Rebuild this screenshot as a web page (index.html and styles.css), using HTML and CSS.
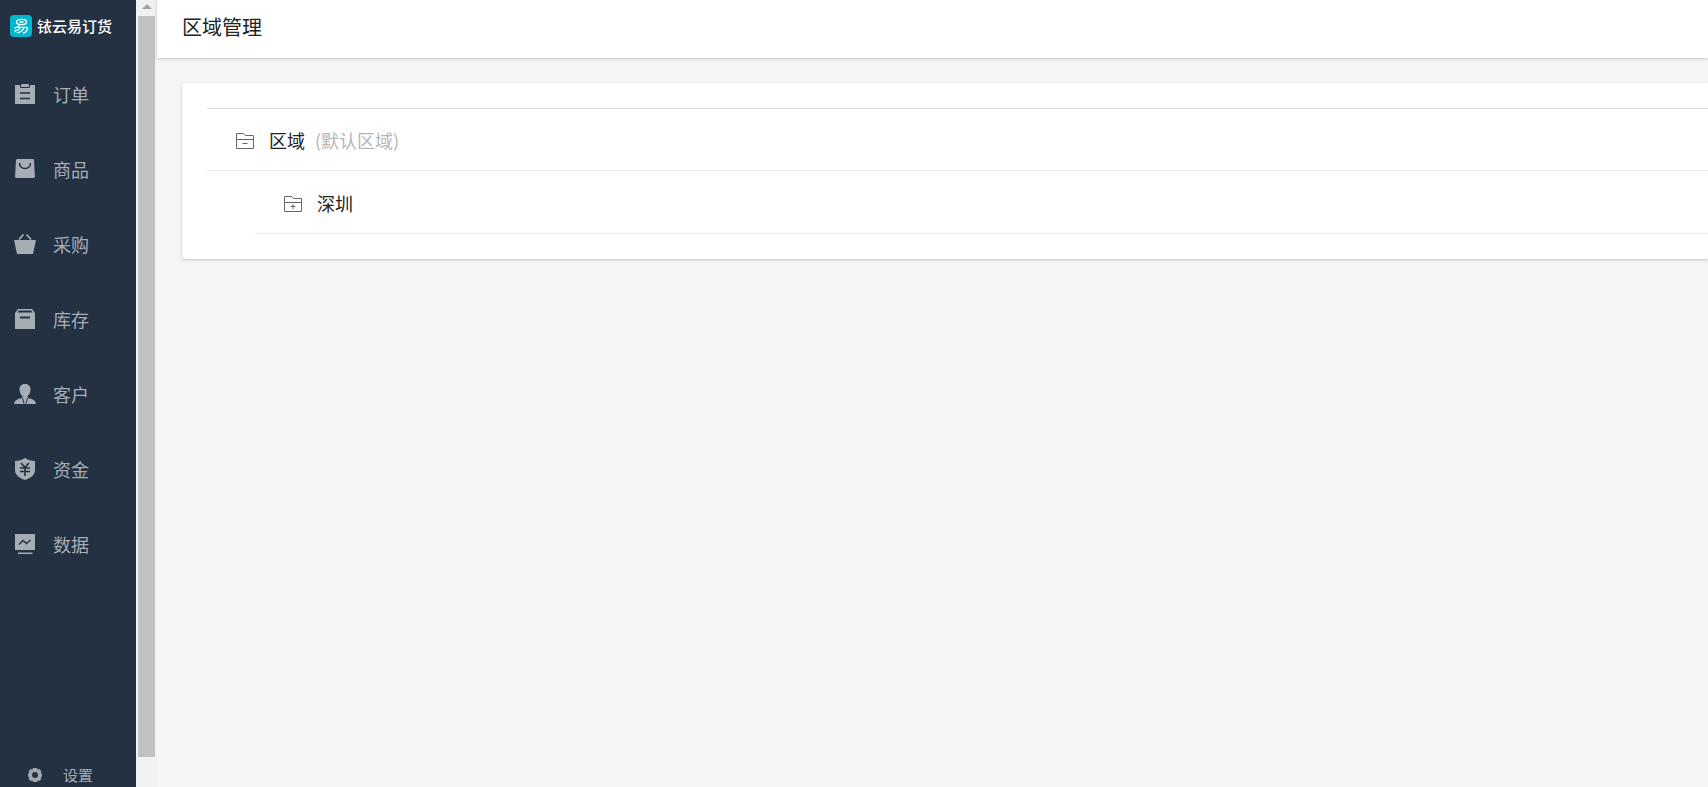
FILE: index.html
```html
<!DOCTYPE html>
<html lang="zh-CN">
<head>
<meta charset="utf-8">
<title>区域管理</title>
<link rel="stylesheet" href="styles.css">
</head>
<body>
<div class="app">
  <aside class="sidebar">
    <div class="brand">
      <svg class="brand-mark" viewBox="0 0 22 22" aria-hidden="true">
        <rect width="22" height="22" rx="4" fill="#00b7d0"/>
        <g fill="none" stroke="#fff" stroke-width="1.3" stroke-linecap="round">
          <ellipse cx="11.5" cy="7" rx="5" ry="2.6"/>
          <path d="M10 7h3M5 13c2-.5 3.500-1.500 4.500-3M7 12.300h9.500c.8 0 1 .4.800 1.200-.5 2.500-1.500 4.300-3.800 4.500M10.500 12.500c-1 1.800-3 3-5.500 3.500M14 12.500c-1 2.700-3.500 4.700-6.500 5.200"/>
        </g>
      </svg>
      <span class="brand-name">铱云易订货</span>
    </div>
    <nav class="menu">
      <a class="menu-item" href="#"><svg class="icon" viewBox="0 0 22 22"><path fill="#a6adb5" d="M1 2h5v1.500c0 .8.600 1.500 1.500 1.500h7c.9 0 1.500-.7 1.500-1.500V2h5v19H1z"/><rect x="7" y="1" width="8" height="3" rx="1" fill="#a6adb5"/><path d="M6 10h10M6 15.500h10" stroke="#233142" stroke-width="1.500"/></svg><span>订单</span></a>
      <a class="menu-item" href="#"><svg class="icon" viewBox="0 0 22 22"><path fill="#a6adb5" d="M3 1h16l1 .8 1 17.200-1 1H2l-1-1L2 1.800z"/><path d="M5.500 5c0 3.500 2.500 5.500 5.500 5.500s5.500-2 5.500-5.500" fill="none" stroke="#233142" stroke-width="1.500"/></svg><span>商品</span></a>
      <a class="menu-item" href="#"><svg class="icon" viewBox="0 0 22 22"><path fill="#a6adb5" d="M0 7h22l-3 14H3z"/><path d="M5 6.500 9.500 1.500M17 6.500l-4.500-5" stroke="#a6adb5" stroke-width="1.700"/></svg><span>采购</span></a>
      <a class="menu-item" href="#"><svg class="icon" viewBox="0 0 22 22"><path fill="#a6adb5" fill-rule="evenodd" d="M4 1h14l3 4v16H1V5zM4.700 2.500 3.500 4.500h15l-1.200-2z"/><path d="M6 9.500h10" stroke="#233142" stroke-width="2"/></svg><span>库存</span></a>
      <a class="menu-item" href="#"><svg class="icon" viewBox="0 0 22 22"><path fill="#a6adb5" d="M11 1c4 0 5.700 2.500 5.500 5.500-.2 3.500-1.800 6-3.300 7l1 1.500c4 1 7.300 2 7.800 6H0c.5-4 3.800-5 7.800-6l1-1.500c-1.500-1-3.100-3.500-3.300-7C5.300 3.500 7 1 11 1z"/><path d="m8.500 15 1.500 5.500M13.500 15 12 20.500" stroke="#233142" fill="none"/></svg><span>客户</span></a>
      <a class="menu-item" href="#"><svg class="icon" viewBox="0 0 22 22"><path fill="#a6adb5" d="M11 0c3 2 6 3 10 3v9c0 5-4 8-10 10C5 20 1 17 1 12V3c4 0 7-1 10-3z"/><path d="m7 5 4 4.500L15 5M6 10h10M6 13.500h10M11 9.500V18" stroke="#233142" stroke-width="1.600" fill="none"/></svg><span>资金</span></a>
      <a class="menu-item" href="#"><svg class="icon" viewBox="0 0 22 22"><path fill="#a6adb5" d="M1 1h20v16H1zM4 19.500h14.500V21H4z"/><path d="m5 11.500 4-4 3.500 3L16.500 7" stroke="#233142" stroke-width="1.400" fill="none"/></svg><span>数据</span></a>
    </nav>
    <a class="settings" href="#"><svg class="gear" viewBox="0 0 14 14"><path fill="#a0a8ae" fill-rule="evenodd" d="M5 0h4l.7 1.500L11.500 1 13.500 3.500l-.7 1.500L14 6v2.500l-1.200.8.5 1.700-2 2-1.700-.5L9 14H5l-.7-1.500-1.800.5L.5 10.800l.7-1.500L0 8.500V6l1.200-1L.5 3.500 2.500 1l1.800.5zM7 4a3 3 0 100 6 3 3 0 000-6z"/></svg><span>设置</span></a>
  </aside>
  <div class="scrollbar" aria-hidden="true">
    <span class="scroll-arrow"></span>
    <span class="scroll-thumb"></span>
  </div>
  <main class="content">
    <header class="page-header"><h1 class="page-title">区域管理</h1></header>
    <section class="card">
      <ul class="tree">
        <li>
          <div class="node">
            <button class="toggle" type="button" aria-label="收起"><svg class="folder" viewBox="0 0 18 16"><path d="M.5 15.500V.5h7l2 2h8v13zM.5 6.500h17M6.500 10.500h5"/></svg></button>
            <span>区域</span><span class="note">(默认区域)</span>
          </div>
          <ul class="subtree">
            <li>
              <div class="node">
                <button class="toggle" type="button" aria-label="展开"><svg class="folder" viewBox="0 0 18 16"><path d="M.5 15.500V.5h7l2 2h8v13zM.5 6.500h17M6.500 10.500h5M9 8v5"/></svg></button>
                <span>深圳</span>
              </div>
            </li>
          </ul>
        </li>
      </ul>
    </section>
  </main>
</div>
</body>
</html>
```
FILE: styles.css
```css
* { box-sizing: border-box; }
body {
  margin: 0;
  font-family: "Noto Sans CJK SC", sans-serif;
  font-weight: 400;
  color: #222;
}
a { color: inherit; text-decoration: none; }
ul { list-style: none; margin: 0; padding: 0; }
.app {
  display: flex;
  height: 100vh;
  overflow: hidden;
  background: #f4f5f7;
}
.sidebar {
  display: flex;
  flex-direction: column;
  flex: none;
  width: 136px;
  background: #233142;
  color: #a6adb5;
}
.brand {
  display: flex;
  align-items: center;
  gap: 5px;
  height: 56px;
  padding: 0 0 4px 10px;
}
.brand-mark { width: 22px; height: 22px; }
.brand-name { color: #fff; font-size: 15px; font-weight: 500; line-height: 22px; }
.menu-item {
  display: flex;
  align-items: center;
  gap: 17px;
  height: 75px;
  padding-left: 14px;
  font-size: 18px;
}
.icon { width: 22px; height: 22px; }
.settings {
  display: flex;
  align-items: center;
  gap: 21px;
  margin-top: auto;
  padding-left: 28px;
  font-size: 15px;
  line-height: 24px;
}
.gear { width: 14px; height: 14px; }
.scrollbar {
  display: flex;
  flex-direction: column;
  align-items: center;
  flex: none;
  width: 21px;
  padding-bottom: 30px;
  background: #f1f1f1;
}
.scroll-arrow {
  margin: 4px 0 7px;
  border: 5px solid transparent;
  border-top: 0;
  border-bottom-color: #a3a3a3;
}
.scroll-thumb { flex: 1; width: 17px; background: #c1c1c1; }
.content { flex: 1; min-width: 0; }
.page-header {
  height: 58px;
  padding: 12px 25px;
  background: #fff;
  box-shadow: 0 1px 3px rgba(0, 0, 0, .2);
}
.page-title { margin: 0; font-size: 20px; font-weight: 400; line-height: 30px; }
.card {
  margin: 25px 0 0 25px;
  padding: 25px 0 25px 25px;
  background: #fff;
  border-radius: 3px 0 0 3px;
  box-shadow: 0 1px 3px rgba(0, 0, 0, .2);
}
.tree { border-top: 1px solid #d9dde8; }
.node {
  display: flex;
  align-items: center;
  height: 62px;
  padding-left: 29px;
  border-bottom: 1px solid #e8eaf0;
  font-size: 18px;
}
.subtree { padding: 1px 0 0 48px; }
.toggle {
  display: flex;
  margin-right: 15px;
  padding: 3px 0 0;
  border: 0;
  background: none;
}
.folder { width: 18px; height: 16px; fill: none; stroke: #666; }
.note { margin-left: 10px; color: #b5b5b5; }
```
